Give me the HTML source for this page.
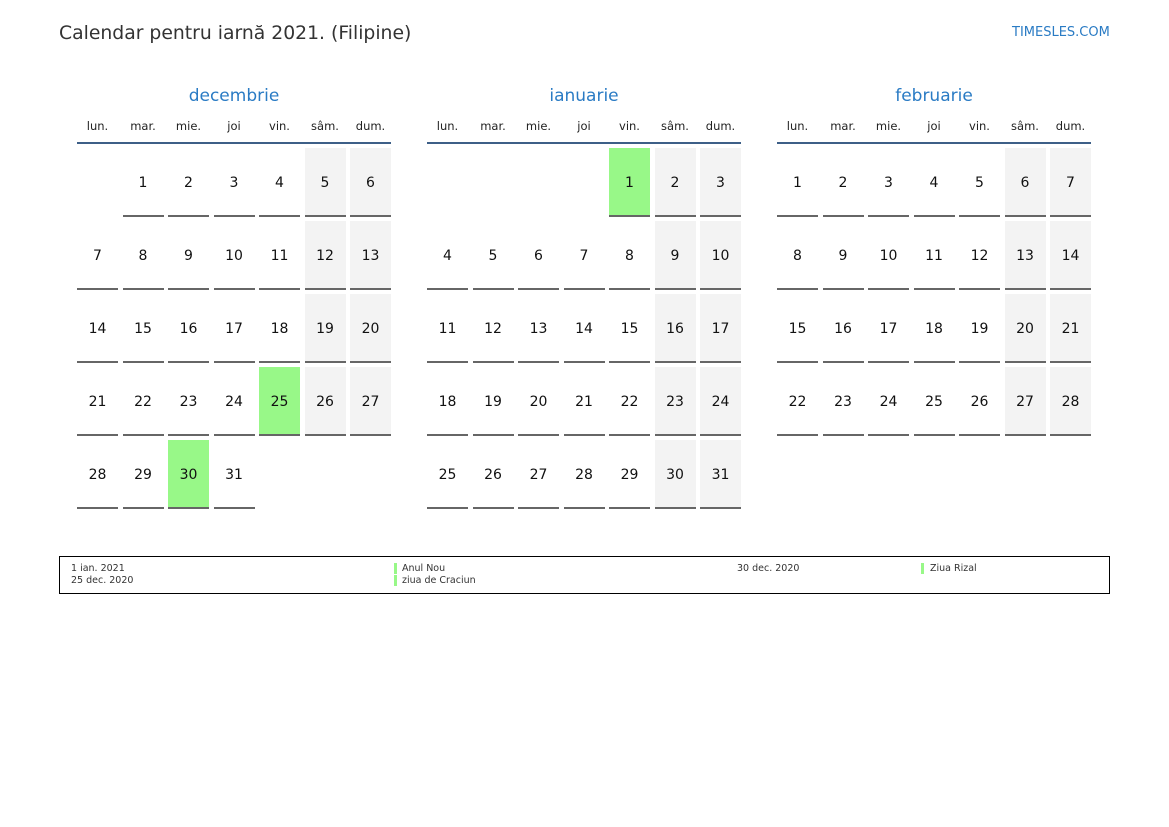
<!DOCTYPE html>
<html><head><meta charset="utf-8"><style>
body{margin:0;width:1169px;height:827px;background:#fff;font-family:"DejaVu Sans","Liberation Sans",sans-serif;position:relative;overflow:hidden}
.t{position:absolute;left:59px;top:23px;font-size:18.8px;color:#333}
.s{position:absolute;left:1012px;top:25px;font-size:13px;color:#2a7bc4}
.m{position:absolute;top:86px;width:314px}
.mt{text-align:center;font-size:17px;color:#2a7bc4;height:24px}
.wd,.g{display:grid;grid-template-columns:repeat(7,41px);column-gap:4.5px}
.wd{margin-top:9px;font-size:11.5px;color:#222;height:17px;text-align:center;border-bottom:2px solid #3d5f87;padding-bottom:6px;width:314px}
.g{row-gap:4px;margin-top:4px}
.g div{height:67px;line-height:71px;overflow:hidden;text-align:center;font-size:14px;color:#111;border-bottom:2px solid #666}
.g div.e{border-bottom:2px solid transparent}
.g div.w{background:#f3f3f3}
.g div.h{background:#98f888}
.lg{position:absolute;left:59px;top:556px;width:1049px;height:36px;border:1px solid #000;font-size:9.5px;color:#333}
.lg span{position:absolute;line-height:12px}
.b{position:absolute;width:3px;height:11px;background:#98f888}
</style></head><body>
<div class="t">Calendar pentru iarnă 2021. (Filipine)</div>
<div class="s">TIMESLES.COM</div>

<div class="m" style="left:77px">
<div class="mt">decembrie</div>
<div class="wd"><span>lun.</span><span>mar.</span><span>mie.</span><span>joi</span><span>vin.</span><span>sâm.</span><span>dum.</span></div>
<div class="g">
<div class="e"></div><div>1</div><div>2</div><div>3</div><div>4</div><div class="w">5</div><div class="w">6</div>
<div>7</div><div>8</div><div>9</div><div>10</div><div>11</div><div class="w">12</div><div class="w">13</div>
<div>14</div><div>15</div><div>16</div><div>17</div><div>18</div><div class="w">19</div><div class="w">20</div>
<div>21</div><div>22</div><div>23</div><div>24</div><div class="h">25</div><div class="w">26</div><div class="w">27</div>
<div>28</div><div>29</div><div class="h">30</div><div>31</div>
</div></div>

<div class="m" style="left:427px">
<div class="mt">ianuarie</div>
<div class="wd"><span>lun.</span><span>mar.</span><span>mie.</span><span>joi</span><span>vin.</span><span>sâm.</span><span>dum.</span></div>
<div class="g">
<div class="e"></div><div class="e"></div><div class="e"></div><div class="e"></div><div class="h">1</div><div class="w">2</div><div class="w">3</div>
<div>4</div><div>5</div><div>6</div><div>7</div><div>8</div><div class="w">9</div><div class="w">10</div>
<div>11</div><div>12</div><div>13</div><div>14</div><div>15</div><div class="w">16</div><div class="w">17</div>
<div>18</div><div>19</div><div>20</div><div>21</div><div>22</div><div class="w">23</div><div class="w">24</div>
<div>25</div><div>26</div><div>27</div><div>28</div><div>29</div><div class="w">30</div><div class="w">31</div>
</div></div>

<div class="m" style="left:777px">
<div class="mt">februarie</div>
<div class="wd"><span>lun.</span><span>mar.</span><span>mie.</span><span>joi</span><span>vin.</span><span>sâm.</span><span>dum.</span></div>
<div class="g">
<div>1</div><div>2</div><div>3</div><div>4</div><div>5</div><div class="w">6</div><div class="w">7</div>
<div>8</div><div>9</div><div>10</div><div>11</div><div>12</div><div class="w">13</div><div class="w">14</div>
<div>15</div><div>16</div><div>17</div><div>18</div><div>19</div><div class="w">20</div><div class="w">21</div>
<div>22</div><div>23</div><div>24</div><div>25</div><div>26</div><div class="w">27</div><div class="w">28</div>
</div></div>

<div class="lg">
<span style="left:11px;top:6px">1 ian. 2021</span>
<span style="left:11px;top:18px">25 dec. 2020</span>
<div class="b" style="left:334px;top:6px"></div><span style="left:342px;top:6px">Anul Nou</span>
<div class="b" style="left:334px;top:18px"></div><span style="left:342px;top:18px">ziua de Craciun</span>
<span style="left:677px;top:6px">30 dec. 2020</span>
<div class="b" style="left:861px;top:6px"></div><span style="left:870px;top:6px">Ziua Rizal</span>
</div>
</body></html>
